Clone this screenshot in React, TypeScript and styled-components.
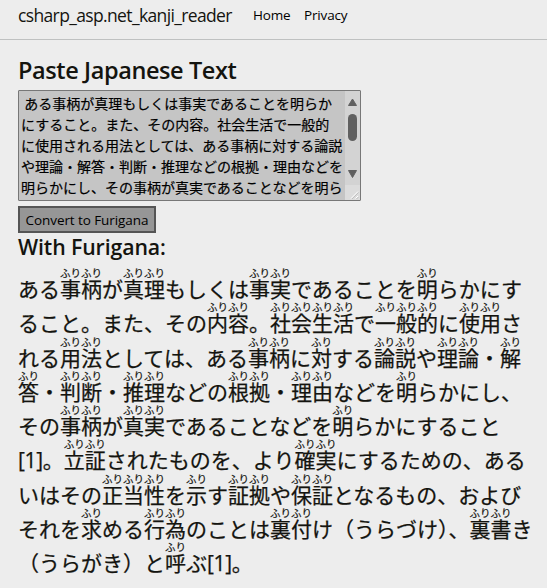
import React from "react";
import styled, { createGlobalStyle } from "styled-components";

const jp = `"Noto Sans CJK JP", sans-serif`;
const latin = `"Open Sans", "Noto Sans", sans-serif`;

const GlobalStyle = createGlobalStyle`
  * { box-sizing: border-box; }
  body { margin: 0; background: #ededed; color: #14140f; overflow: hidden; }
`;

const Page = styled.div`
  width: 547px;
  height: 588px;
  background: #ededed;
  font-family: ${latin};
`;

const Header = styled.header`
  display: flex;
  align-items: flex-start;
  height: 40px;
  padding-left: 18px;
  border-bottom: 1px solid #bfc1c1;
  white-space: nowrap;
`;

const Brand = styled.a`
  width: 235px;
  line-height: 30px;
  font-size: 17.5px;
  letter-spacing: -0.64px;
`;

const NavLink = styled.a<{ $width: number }>`
  width: ${(p) => p.$width}px;
  line-height: 30px;
  font-size: 13.5px;
  letter-spacing: -0.15px;
  color: #000;
`;

const Main = styled.main`
  display: flex;
  flex-direction: column;
  align-items: flex-start;
  padding: 15px 0 0 18px;
`;

const Heading = styled.h1<{ $size: number; $height: number; $spacing: number }>`
  margin: 0;
  height: ${(p) => p.$height}px;
  line-height: 30px;
  font-size: ${(p) => p.$size}px;
  font-weight: 600;
  letter-spacing: ${(p) => p.$spacing}px;
  white-space: nowrap;
`;

const Editor = styled.div`
  display: flex;
  width: 343px;
  height: 111px;
  margin-bottom: 5px;
  border: 1px solid #777;
  border-radius: 1px;
  background: #c5c5c5;
`;

const Input = styled.textarea`
  display: block;
  width: 326px;
  height: 109px;
  padding: 2px 0 0 2px;
  border: 0;
  outline: 0;
  resize: none;
  overflow: hidden;
  background: transparent;
  color: #000;
  font: 400 14px/21px ${jp};
  -webkit-text-stroke: 0.2px #000;
  white-space: pre;
`;

const Scrollbar = styled.div`
  display: flex;
  flex-direction: column;
  width: 15px;
  background: #d3d3d3;
`;

const Convert = styled.button`
  width: 138px;
  height: 27px;
  margin: 0 0 -1px;
  padding: 0;
  border: 2px solid #555;
  background: #969696;
  color: #000;
  font: 13.5px/22px ${latin};
  letter-spacing: -0.08px;
  white-space: nowrap;
`;

const Result = styled.section`
  font-family: ${jp};
  font-size: 21px;
  -webkit-text-stroke: 0.25px #14140f;
`;

const Line = styled.p`
  margin: 0;
  height: 34.25px;
  line-height: 34px;
  white-space: nowrap;
`;

const Ruby = styled.span`
  position: relative;
`;

const Reading = styled.span`
  position: absolute;
  left: 0;
  top: -6px;
  width: 21px;
  font-size: 10.5px;
  line-height: 12px;
  -webkit-text-stroke-width: 0.2px;
`;

const Reference = styled.span`
  font-family: ${latin};
  letter-spacing: -0.3px;
`;

const source = ` ある事柄が真理もしくは事実であることを明らか
にすること。また、その内容。社会生活で一般的
に使用される用法としては、ある事柄に対する論説
や理論・解答・判断・推理などの根拠・理由などを
明らかにし、その事柄が真実であることなどを明ら`;

const lines = [
  "ある事柄が真理もしくは事実であることを明らかにす",
  "ること。また、その内容。社会生活で一般的に使用さ",
  "れる用法としては、ある事柄に対する論説や理論・解",
  "答・判断・推理などの根拠・理由などを明らかにし、",
  "その事柄が真実であることなどを明らかにすること",
  "[1]。立証されたものを、より確実にするための、ある",
  "いはその正当性を示す証拠や保証となるもの、および",
  "それを求める行為のことは裏付け（うらづけ）、裏書き",
  "（うらがき）と呼ぶ[1]。",
];

function annotate(line: string) {
  return line.split(/(\[1\]|[\u4e00-\u9fff])/).map((part, i) => {
    if (part === "[1]") return <Reference key={i}>{part}</Reference>;
    if (i % 2 === 1)
      return (
        <Ruby key={i}>
          {part}
          <Reading>ふり</Reading>
        </Ruby>
      );
    return part;
  });
}

export default function App() {
  return (
    <Page>
      <GlobalStyle />
      <Header>
        <Brand>csharp_asp.net_kanji_reader</Brand>
        <NavLink $width={51}>Home</NavLink>
        <NavLink $width={50}>Privacy</NavLink>
      </Header>
      <Main>
        <Heading $size={23.5} $height={35} $spacing={-0.4}>Paste Japanese Text</Heading>
        <Editor>
          <Input readOnly value={source} />
          <Scrollbar>
            <svg width="15" height="109" viewBox="0 0 15 109">
              <path d="M7.5 8 L11.5 14.5 H3.5Z M3.5 79.5 H11.5 L7.5 86.5Z" fill="#606060" stroke="#606060" strokeLinejoin="round" />
              <rect x="3" y="23" width="9" height="27" rx="4.5" fill="#606060" />
              <rect x="0" y="94" width="15" height="15" fill="#dcdcdc" />
              <path d="M6 107.5 L13 100.5 M10.5 107.5 L13 105" stroke="#fff" />
              <path d="M7 108 L13.5 101.5 M11.5 108 L13.5 106" stroke="#aaa" strokeWidth=".6" />
            </svg>
          </Scrollbar>
        </Editor>
        <Convert>Convert to Furigana</Convert>
        <Heading $size={21.3} $height={39} $spacing={-0.12}>With Furigana:</Heading>
        <Result>
          {lines.map((line) => (
            <Line key={line}>{annotate(line)}</Line>
          ))}
        </Result>
      </Main>
    </Page>
  );
}
